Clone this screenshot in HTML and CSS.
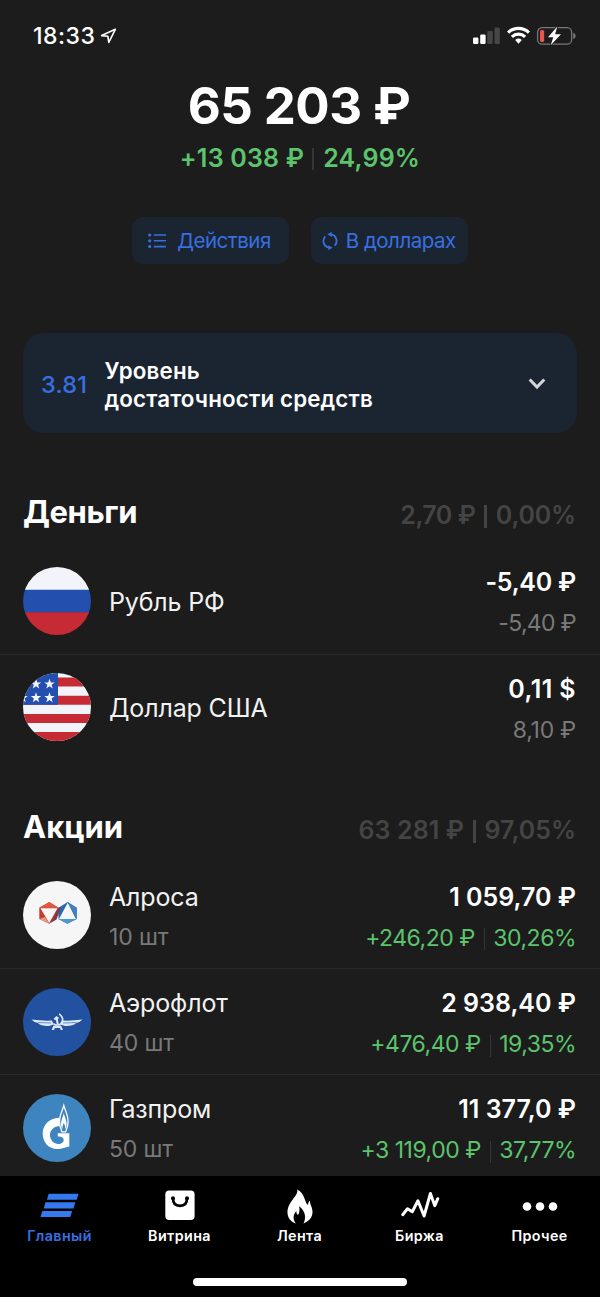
FILE: index.html
```html
<!DOCTYPE html>
<html lang="ru">
<head>
<meta charset="utf-8">
<title>Портфель</title>
<link rel="stylesheet" href="styles.css">
</head>
<body>
<div class="screen">
  <header class="status">
    <span class="time">18:33</span>
    <svg class="loc" width="17" height="17" viewBox="0 0 17 17"><path d="M15.3 1.3 1.6 7.6l6.3.7.9 6.2z" fill="none" stroke="#fff" stroke-width="1.6" stroke-linejoin="round"/></svg>
    <svg class="signals" width="104" height="20" viewBox="0 0 104 20">
      <g fill="#fff"><rect x="1" y="11.6" width="5.4" height="6.4" rx="1.2"/><rect x="8.2" y="8.6" width="5.4" height="9.4" rx="1.2"/></g>
      <g fill="#464646"><rect x="15.3" y="5" width="5.4" height="13" rx="1.2"/><rect x="22.5" y="1.5" width="5.4" height="16.5" rx="1.2"/></g>
      <g fill="none" stroke="#fff" stroke-width="3.1"><path d="M36.1 6.6a15 15 0 0 1 20.8 0"/><path d="M39.9 10.8a9.5 9.5 0 0 1 13.2 0"/></g>
      <path d="M43.2 13.9a5 5 0 0 1 6.6 0L46.5 17.8z" fill="#fff"/>
      <rect x="65.6" y="1.6" width="34" height="16.6" rx="4.5" fill="none" stroke="#777" stroke-width="1.3"/>
      <path d="M101.2 6.8q2.5.8 2.5 3.1t-2.5 3.1z" fill="#777"/>
      <rect x="68" y="4" width="4.2" height="12" rx="1.5" fill="#e8564b"/>
      <path d="M85.300.500 76 11.200h5.300l-2.600 8 10.300-11h-5.900z" fill="#fff" stroke="#1c1c1c" stroke-width="1.600" paint-order="stroke"/>
    </svg>
  </header>

  <section class="summary">
    <div class="total">65 203 ₽</div>
    <div class="gain"><span class="gain-sum">+13 038 ₽</span><i class="bar"></i><span class="gain-pct">24,99%</span></div>
    <div class="actions">
      <div class="btn btn-actions">
        <svg width="18" height="16" viewBox="0 0 18 16"><g fill="#376fe0"><circle cx="1.7" cy="2" r="1.6"/><circle cx="1.7" cy="7.8" r="1.6"/><circle cx="1.7" cy="13.6" r="1.6"/></g><path d="M5.8 2H18M5.8 7.8H18M5.8 13.6H18" stroke="#376fe0" stroke-width="1.6"/></svg>
        <span>Действия</span>
      </div>
      <div class="btn btn-currency">
        <svg width="16" height="18" viewBox="0 0 16 18"><g fill="none" stroke="#376fe0" stroke-width="1.8"><path d="M9.3 2.4A6.7 6.7 0 0 1 12.7 13.6"/><path d="M6.7 15.6A6.7 6.7 0 0 1 3.3 4.4"/></g><path d="M5.2 2.3 9.8 0v4.7zM10.8 15.7 6.2 13.3V18z" fill="#376fe0"/></svg>
        <span>В долларах</span>
      </div>
    </div>
  </section>

  <section class="level">
    <span class="score">3.81</span>
    <span class="level-text">Уровень<br>достаточности средств</span>
    <svg width="18" height="12" viewBox="0 0 18 12"><path d="m1.7 1.5 7.3 7.6 7.3-7.6" fill="none" stroke="#d2d5d9" stroke-width="3"/></svg>
  </section>

  <section class="group money">
    <div class="head"><h2 class="snug">Деньги</h2><div class="sub"><em class="snug">2,70 ₽</em><i class="bar"></i><em class="pct">0,00%</em></div></div>
    <div class="row">
      <svg class="logo" viewBox="0 0 68 68"><clipPath id="c"><circle cx="34" cy="34" r="34"/></clipPath><g clip-path="url(#c)"><path fill="#f3f4f9" d="M0 0h68v23H0z"/><path fill="#234fae" d="M0 22.7h68v23H0z"/><path fill="#c62b35" d="M0 45.3h68V68H0z"/></g></svg>
      <div class="name"><span>Рубль РФ</span></div>
      <div class="values"><b class="tight">-5,40 ₽</b><span class="narrow">-5,40 ₽</span></div>
    </div>
    <div class="row">
      <svg class="logo" viewBox="0 0 68 68"><defs><path id="star" d="M0-5.3 1.3-1.6H5.2L2.1.8 3.2 4.6 0 2.3-3.2 4.6-2.1.8-5.2-1.6H-1.3z"/></defs><g clip-path="url(#c)"><path fill="#f3f4f9" d="M0 0h68v68H0z"/><path fill="#c62b35" d="M0 4.5h68v9H0zM0 22.7h68v9H0zM0 40.9h68v9H0zM0 59h68v9H0z"/><path fill="#234fae" d="M0 0h35v31.7H0z"/><g fill="#f5f7fc"><use href="#star" x="13" y="11"/><use href="#star" x="26.5" y="11"/><use href="#star" x="13" y="24.6"/><use href="#star" x="26.5" y="24.6"/><use href="#star" x="-.5" y="24.6"/><use href="#star" x="26.5" y="-3.5"/></g></g></svg>
      <div class="name second"><span>Доллар США</span></div>
      <div class="values"><b class="wide">0,11 $</b><span class="tight">8,10 ₽</span></div>
    </div>
  </section>

  <section class="group stocks">
    <div class="head"><h2>Акции</h2><div class="sub"><em class="wide">63 281 ₽</em><i class="bar"></i><em>97,05%</em></div></div>
    <div class="row">
      <svg class="logo" viewBox="0 0 68 68"><circle cx="34" cy="34" r="34" fill="#f6f6f7"/>
        <path fill="#c53a31" d="M26.3 21 35.5 26.7V34L26.3 42.8 16.3 38V26.7z"/>
        <path fill="#dd5b45" d="M26.3 21 35.5 26.7 16.3 26.7z"/>
        <path fill="#e39a80" d="M16.3 38 26.3 42.8 22 36z"/>
        <path fill="#2869ac" d="M44.7 21 53.7 26.7V38L44.3 42.8 35.5 38V26.7z"/>
        <path fill="#4f97cc" d="M35.5 38H53.7L44.3 42.8z"/>
        <path fill="#3f82bf" d="M44.7 21 53.7 26.7V38z"/>
        <path fill="#74395f" d="M35.5 26.7 38 26 33.5 38.5 27.5 42z"/>
        <path fill="#a8322f" d="M34.8 29 31 38.5 26.3 42.8z"/>
        <path fill="#f6f6f7" d="M17.5 27.2H34.5L26.2 42zM44.7 21.800 53 38H36z"/>
      </svg>
      <div class="name"><span>Алроса</span><small>10 шт</small></div>
      <div class="values"><b>1 059,70 ₽</b><span class="up"><em>+246,20 ₽</em><i class="bar"></i><em>30,26%</em></span></div>
    </div>
    <div class="row">
      <svg class="logo" viewBox="0 0 68 68"><circle cx="34" cy="34" r="34" fill="#22519f"/>
        <g fill="#dce9f7"><path d="M8.5 31.5q11 1.5 20.5 1l1.5 4-4.5 1.5q-8 .3-11.500-3.200-4-.8-6-3.300zM59.500 31.500q-11 1.500-20.500 1l-1.500 4 4.500 1.500q8 .3 11.500-3.200 4-.8 6-3.300z"/><path d="m30.500 31 2.800-3 2.700 1.800-1.200 2 1.200 4.700h-2.200l-.9-4.200z"/><path d="M28.500 42 30.500 37.500h7.500l2 4.500h-2.300l-.8-2h-5l-.8 2z"/></g>
        <path d="M36.200 25.800q6 5.300 1.500 10-3.200 2.500-7.500-.2" fill="none" stroke="#dce9f7" stroke-width="1.700"/>
        <path d="m15 34.500 13 .5m25-.5-13 .5" stroke="#22519f" stroke-width=".6"/>
      </svg>
      <div class="name"><span>Аэрофлот</span><small>40 шт</small></div>
      <div class="values"><b>2 938,40 ₽</b><span class="up"><em>+476,40 ₽</em><i class="bar"></i><em>19,35%</em></span></div>
    </div>
    <div class="row">
      <svg class="logo" viewBox="0 0 68 68"><circle cx="34" cy="34" r="34" fill="#3e84bf"/>
        <path fill="#fff" d="M36 23.700C26 24 19.700 31 19.700 39.500c0 9 6 15.500 14.500 15.500 5 0 8-1.800 12.100-2.500V39.300H34.800v3.200c3.800-.3 5.900 1 5.900 3.300 0 2.600-2.300 4.200-5.200 4.200-4.700 0-8.500-4-8.500-9 0-5 4-8.700 10-8.900z"/>
        <path fill="#3e84bf" stroke="#fff" stroke-width="1.300" d="M40.800 11.500c-1.400 5-4.300 9.500-4.300 16 0 4.500 1.400 7.500 2.400 10.300h3.800c1-2.800 2.400-5.800 2.400-10.300 0-6.500-2.900-11-4.300-16z"/>
        <path fill="#fff" d="M40.800 19c-.6 4-2.800 6.500-2.800 11 0 2.500.8 4 1.300 5.500 0-2.500.5-4.500 1.500-6.500 1 2 1.500 4 1.500 6.500.5-1.500 1.300-3 1.300-5.500 0-4.500-2.200-7-2.800-11z"/>
      </svg>
      <div class="name"><span>Газпром</span><small>50 шт</small></div>
      <div class="values"><b>11 377,0 ₽</b><span class="up"><em>+3 119,00 ₽</em><i class="bar"></i><em>37,77%</em></span></div>
    </div>
  </section>

  <footer class="dock">
    <nav class="tabs">
      <div class="tab active"><svg width="40" height="36" viewBox="0 0 40 36"><path fill="#3579ee" d="m8.700 5.700h29.800L36.700 11.800H6.900zM5.500 14.300h29.800l-1.800 6.100H3.700zM2.300 23h29.800l-1.800 6H.5z"/></svg><span>Главный</span></div>
      <div class="tab"><svg width="40" height="36" viewBox="0 0 40 36"><rect x="5.300" y="2.500" width="29.300" height="29.500" rx="4" fill="#fff"/><path d="M13 10.500q0 7.300 7 7.300t7-7.300" fill="none" stroke="#000" stroke-width="2.700"/><circle cx="13" cy="10.300" r="2"/><circle cx="27" cy="10.300" r="2"/></svg><span>Витрина</span></div>
      <div class="tab"><svg width="40" height="36" viewBox="0 0 40 36"><path fill="#fff" d="M17.300 1.500C18.500 8.300 7.500 13.500 7.500 24.500c0 5 3 9 8.300 11-3.500-5-2.300-9.500.5-12.500 0 2 .5 3 1.700 4 2-2.800 1.500-5.500 1.200-8.800 4.800 3.800 8 10 4.300 17.300 5.500-2.200 9-6 9-11.500 0-5-2.500-7-2.700-11.200-1.200 1-1.800 2.600-1.800 4.300C24 14 25.500 5.500 17.300 1.500z"/></svg><span>Лента</span></div>
      <div class="tab"><svg width="40" height="36" viewBox="0 0 40 36"><path d="m2.700 26.700 4.800-5.900 4.800 3 5.600-11 6.200 15.200 6.300-22.500 4.400 12.200 3-7" fill="none" stroke="#fff" stroke-width="3" stroke-linecap="round" stroke-linejoin="round"/></svg><span>Биржа</span></div>
      <div class="tab"><svg width="40" height="36" viewBox="0 0 40 36"><g fill="#fff"><circle cx="7" cy="18.500" r="4.300"/><circle cx="20" cy="18.500" r="4.300"/><circle cx="33" cy="18.500" r="4.300"/></g></svg><span>Прочее</span></div>
    </nav>
    <div class="home"></div>
  </footer>
</div>
</body>
</html>
```
FILE: styles.css
```css
* { box-sizing: border-box; }
body { margin: 0; background: #1c1c1c; color: #fff; font-family: Inter, "Noto Sans", sans-serif; }
svg { display: block; flex: none; }
span, b, em, small, h2 { white-space: pre; }
.screen { width: 600px; height: 1297px; overflow: hidden; display: flex; flex-direction: column; }

.status { height: 76px; flex: none; display: flex; align-items: flex-start; padding: 25px 24px 0 33px; }
.time { width: 67px; font-size: 23px; line-height: 23px; font-weight: 500; letter-spacing: .5px; }
.loc { margin-top: 3px; }
.signals { margin-left: auto; margin-top: 1px; }

.summary { height: 257px; flex: none; display: flex; flex-direction: column; align-items: center; }
.total { font-size: 51px; font-weight: 700; line-height: 60px; letter-spacing: -.6px; margin-right: 2px; }
.gain { display: flex; align-items: center; height: 30px; margin-top: 7px; font-size: 25px; font-weight: 600; letter-spacing: .2px; color: #5bc46c; }
.bar { width: 2px; height: 22px; background: #363636; margin: 2px 9px 0 8px; }
.actions { display: flex; gap: 22.5px; margin-top: 44px; }
.btn { width: 156.5px; height: 47px; border-radius: 11px; background: #1b2531; color: #376fe0; font-size: 20.5px; letter-spacing: -.5px; display: flex; align-items: center; }
.btn-actions { padding-left: 16px; gap: 11px; }
.btn-currency { padding-left: 11px; gap: 7.5px; }

.level { height: 100px; flex: none; margin: 0 23px; border-radius: 21px; background: #1b2531; display: flex; align-items: center; padding: 2px 31px 0 18px; }
.score { width: 63.5px; color: #376fe0; font-size: 23.5px; font-weight: 500; letter-spacing: .2px; padding-top: 1px; }
.level-text { flex: 1; padding-top: 1px; font-size: 22.3px; line-height: 28px; font-weight: 600; letter-spacing: .17px; }

.group { flex: none; }
.money { margin-top: 47px; }
.stocks { margin-top: 35px; }
.head { height: 68px; display: flex; justify-content: space-between; padding: 12px 24px 0 23px; line-height: 40px; }
.head h2 { margin: 0; font-size: 31px; font-weight: 700; }
.head h2.snug { letter-spacing: -.4px; }
.sub { height: 40px; margin-top: 3px; display: flex; align-items: center; font-size: 25px; font-weight: 600; color: #444; }
.sub em { font-style: normal; }
.sub .snug { letter-spacing: -.5px; }
.sub .pct { letter-spacing: -.2px; }
.sub .wide { letter-spacing: .1px; }
.sub .bar { width: 2.5px; height: 23px; background: #444; margin: 3px 9px 0; }
.row { height: 105.8px; display: flex; align-items: center; padding: 0 24px 0 23px; }
.row + .row { border-top: 1.5px solid #292929; }
.logo { width: 68px; height: 68px; }
.name { flex: 1; margin-left: 18px; padding-top: 3px; display: flex; flex-direction: column; font-size: 25px; line-height: 40px; letter-spacing: -.15px; color: #f2f2f2; }
.name.second { padding-top: 2px; }
.name small { font-size: 23px; color: #797979; }
.values { display: flex; flex-direction: column; align-items: flex-end; padding-top: 5px; line-height: 41px; color: #797979; font-size: 23px; }
.values b { font-size: 25px; font-weight: 600; color: #fff; }
.tight { letter-spacing: -.25px; }
.narrow { letter-spacing: -.7px; }
.wide { letter-spacing: .4px; }
.up { display: flex; align-items: center; color: #5bc46c; letter-spacing: -.5px; }
.up em { font-style: normal; }
.up .bar { width: 1.5px; margin-right: 8px; margin-left: 9px; }

.dock { position: absolute; left: 0; top: 1176px; width: 600px; height: 121px; background: #000; }
.tabs { display: grid; grid-template-columns: repeat(5, 120px); padding-top: 12px; }
.tab { display: flex; flex-direction: column; align-items: center; padding-right: 1px; font-size: 14.3px; font-weight: 600; line-height: 24px; letter-spacing: .4px; }
.active { color: #376fe0; }
.home { width: 214px; height: 8px; border-radius: 4px; background: #fff; margin: 30px auto 0; }
```
